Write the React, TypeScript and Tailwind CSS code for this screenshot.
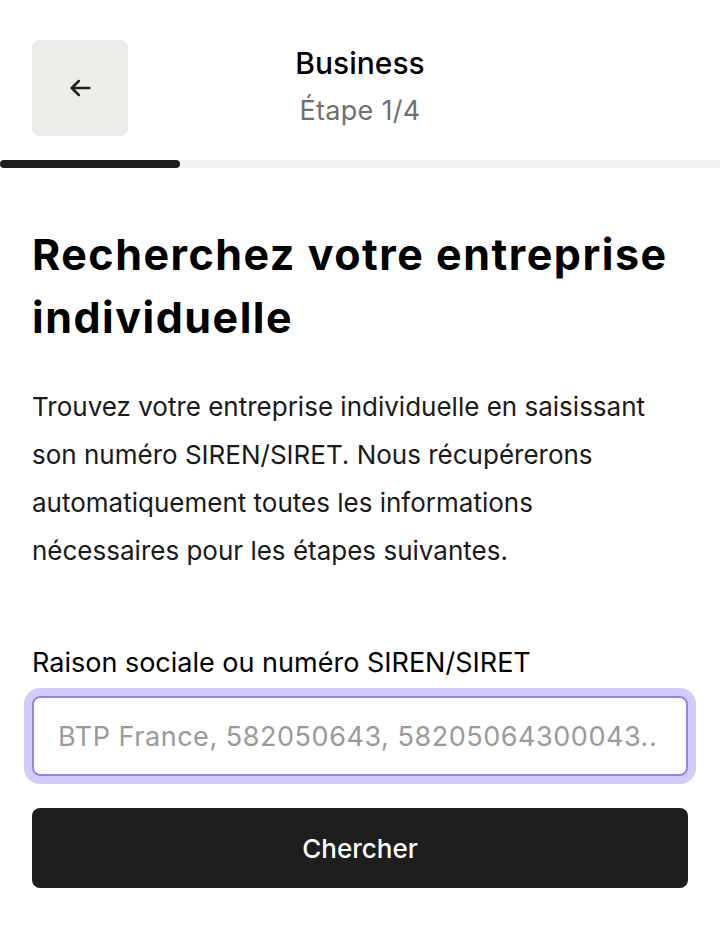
import { useState } from "react";

const font = "font-['Inter','Noto_Sans',sans-serif]";

export default function App() {
  const [query, setQuery] = useState("");

  return (
    <div className={`min-h-[939px] w-[720px] bg-white text-[#111111] ${font}`}>
      <header className="flex items-start px-8 pt-10">
        <button
          type="button"
          aria-label="Retour"
          className="flex h-24 w-24 shrink-0 items-center justify-center rounded-lg bg-[#ECECE8]"
        >
          <svg width="28" height="28" viewBox="0 0 24 24" fill="none" stroke="#1e1e1e" strokeWidth="2.2" strokeLinecap="round" strokeLinejoin="round">
            <path d="M20 12H5" />
            <path d="M11 6l-6 6 6 6" />
          </svg>
        </button>
        <div className="-ml-24 flex flex-1 flex-col items-center pt-[3px]">
          <span className="text-[30px] font-medium leading-[40px] text-black">Business</span>
          <span className="mt-[11px] text-[27px] leading-[34px] tracking-[0.01em] text-[#707070]">Étape 1/4</span>
        </div>
      </header>

      <div className="mt-6 h-2 w-full bg-[#F2F2F0]">
        <div className="h-2 w-[180px] rounded-full bg-[#1e1e1e]" />
      </div>

      <main className="px-8 pt-[55px]">
        <h1 className="text-[43px] font-bold leading-[63px] tracking-[0.035em] text-black">
          Recherchez votre entreprise individuelle
        </h1>
        <p className="mt-[34px] max-w-[620px] text-[26px] leading-[48px] text-[#1a1a1a]">
          Trouvez votre entreprise individuelle en saisissant son numéro SIREN/SIRET. Nous récupérerons
          automatiquement toutes les informations nécessaires pour les étapes suivantes.
        </p>

        <label className="mt-[71px] block text-[27px] leading-[34px] text-black" htmlFor="siren">
          Raison sociale ou numéro SIREN/SIRET
        </label>
        <div className="mt-4 rounded-lg ring-8 ring-[#D4CAFB]">
          <input
            id="siren"
            value={query}
            onChange={(e) => setQuery(e.target.value)}
            placeholder="BTP France, 582050643, 58205064300043.."
            className="block h-20 w-full rounded-lg border-2 border-[#9381F0] bg-white px-6 text-[27px] tracking-[0.02em] text-black outline-none placeholder:text-[#9a9a9a]"
          />
        </div>

        <button
          type="button"
          className="mt-8 flex h-20 w-full items-center justify-center rounded-lg bg-[#1e1e1e] text-[26px] font-medium text-white"
        >
          Chercher
        </button>
      </main>
    </div>
  );
}
